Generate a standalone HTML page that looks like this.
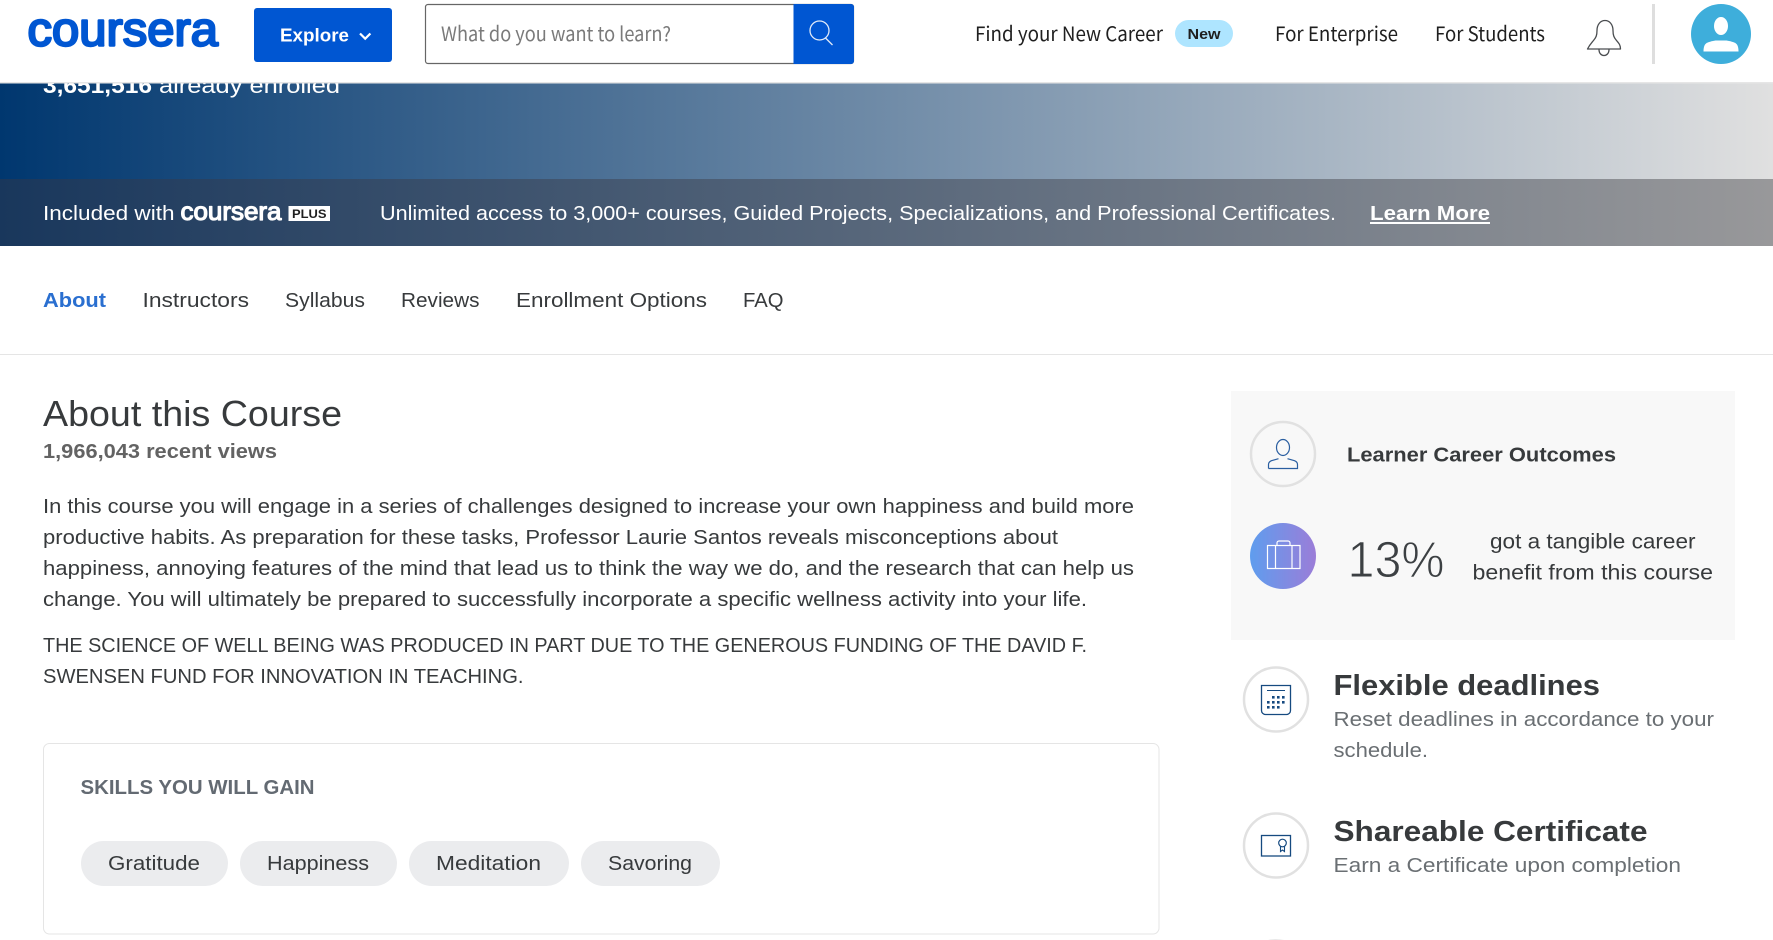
<!DOCTYPE html>
<html lang="en">
<head>
<meta charset="utf-8">
<title>The Science of Well-Being | Coursera</title>
<style>
html,body{margin:0;padding:0;width:1773px;height:940px;overflow:hidden;background:#fff}
svg{display:block;font-family:"Liberation Sans",Arial,sans-serif}
text{white-space:pre}
.b{font-weight:700}
.p{font-size:20.5px;fill:#373a3c}
.g{font-size:20.5px;fill:#6a6f73}
.h{font-family:"Noto Sans CJK JP","Liberation Sans",sans-serif;font-size:20px;fill:#1f1f1f}
</style>
</head>
<body>
<svg width="1773" height="940" viewBox="0 0 1773 940" xmlns="http://www.w3.org/2000/svg">
<defs>
<linearGradient id="hero" x1="0" x2="1" y1="0" y2="0"><stop offset="0" stop-color="#00376f"/><stop offset="1" stop-color="#e0e0e0"/></linearGradient>
<linearGradient id="band" x1="0" x2="1" y1="0" y2="0"><stop offset="0" stop-color="#19375c"/><stop offset="1" stop-color="#98989a"/></linearGradient>
<linearGradient id="brief" x1="0" x2="1" y1="0" y2="0"><stop offset="0" stop-color="#5f9dee"/><stop offset="1" stop-color="#9b7dd8"/></linearGradient>
</defs>

<rect width="1773" height="940" fill="#fff"/>

<!-- hero -->
<rect x="0" y="83" width="1773" height="96" fill="url(#hero)"/>
<text class="b" x="43" y="93" font-size="22" fill="#fff" textLength="109" lengthAdjust="spacingAndGlyphs">3,651,516</text>
<text x="159" y="93" font-size="22" fill="#fff" textLength="181" lengthAdjust="spacingAndGlyphs">already enrolled</text>

<!-- header -->
<rect x="0" y="0" width="1773" height="82" fill="#fff"/>
<rect x="0" y="82" width="1773" height="1.5" fill="#e6e6e6"/>
<text x="27.500" y="45.500" font-size="47.5" fill="#0056d2" stroke="#0056d2" stroke-width="2.4" stroke-linejoin="round" textLength="190.500" lengthAdjust="spacingAndGlyphs">coursera</text>

<rect x="254" y="8" width="138" height="54" rx="3" fill="#0056d2"/>
<text class="b" x="280" y="41.5" font-size="18" fill="#fff" textLength="69" lengthAdjust="spacingAndGlyphs">Explore</text>
<path d="M360 33.5l5.200 5.200 5.200-5.200" fill="none" stroke="#fff" stroke-width="2.200"/>

<rect x="425.500" y="4.500" width="428" height="59" rx="2.500" fill="#fff" stroke="#666" stroke-width="1.200"/>
<path d="M793.500 4h57.500a3 3 0 0 1 3 3v54a3 3 0 0 1-3 3h-57.500z" fill="#0056d2"/>
<text class="h" x="441" y="41" style="fill:#7a7a7a" textLength="230" lengthAdjust="spacingAndGlyphs">What do you want to learn?</text>
<circle cx="819.500" cy="30.500" r="9.500" fill="none" stroke="#dfe9f8" stroke-width="1.300"/>
<path d="M825.500 38l7 7" fill="none" stroke="#dfe9f8" stroke-width="1.300"/>

<text class="h" x="975" y="41" textLength="188" lengthAdjust="spacingAndGlyphs">Find your New Career</text>
<rect x="1175" y="20" width="58" height="27" rx="13.500" fill="#aee5ff"/>
<text class="b" x="1187.500" y="39" font-size="15" fill="#1f1f1f" textLength="33" lengthAdjust="spacingAndGlyphs">New</text>
<text class="h" x="1275" y="41" textLength="123" lengthAdjust="spacingAndGlyphs">For Enterprise</text>
<text class="h" x="1435" y="41" textLength="110" lengthAdjust="spacingAndGlyphs">For Students</text>

<path d="M1587.500 49h33c0-4-1.500-5.500-4-8.500-2.500-3-3.500-5-3.500-10 0-6-3.500-10-8-10s-8 4-8 10c0 5-1 7-3.500 10-2.500 3-4 4.500-6 8.500z" fill="#fff" stroke="#4a4d50" stroke-width="1.300" stroke-linejoin="round"/>
<path d="M1599 49.500c0 8 10 8 10 0" fill="none" stroke="#4a4d50" stroke-width="1.300"/>
<rect x="1652" y="4" width="3" height="60" fill="#dedede"/>
<circle cx="1721" cy="34" r="30" fill="#3eaedb"/>
<ellipse cx="1721" cy="26" rx="7" ry="9" fill="#fff"/>
<path d="M1703.500 51.500c0-3 .5-6 2-7.500 2-2 7-3 10-3.500h11c3 .5 8 1.500 10 3.500 1.500 1.500 2 4.500 2 7.500z" fill="#fff"/>

<!-- plus band -->
<rect x="0" y="179" width="1773" height="67" fill="url(#band)"/>
<text x="43" y="220" font-size="20.500" fill="#fff" textLength="131.500" lengthAdjust="spacingAndGlyphs">Included with</text>
<text x="180.500" y="220" font-size="25" fill="#fff" stroke="#fff" stroke-width="1.200" stroke-linejoin="round" textLength="101" lengthAdjust="spacingAndGlyphs">coursera</text>
<rect x="288.500" y="206" width="41.500" height="15" fill="#fff"/>
<text class="b" x="292" y="218" font-size="12" fill="#1f1f1f" textLength="34.500" lengthAdjust="spacingAndGlyphs">PLUS</text>
<text x="380" y="220" font-size="20.500" fill="#fff" textLength="956" lengthAdjust="spacingAndGlyphs">Unlimited access to 3,000+ courses, Guided Projects, Specializations, and Professional Certificates.</text>
<text class="b" x="1370" y="220" font-size="20.500" fill="#fff" textLength="120" lengthAdjust="spacingAndGlyphs">Learn More</text>
<rect x="1370" y="222" width="120" height="2" fill="#fff"/>

<!-- tabs -->
<text class="b" x="43" y="307" font-size="20.500" fill="#2a6fd0" textLength="63" lengthAdjust="spacingAndGlyphs">About</text>
<text x="142.500" y="307" font-size="20.500" fill="#373a3c" textLength="106.500" lengthAdjust="spacingAndGlyphs">Instructors</text>
<text x="285" y="307" font-size="20.500" fill="#373a3c" textLength="80" lengthAdjust="spacingAndGlyphs">Syllabus</text>
<text x="401" y="307" font-size="20.500" fill="#373a3c" textLength="78.500" lengthAdjust="spacingAndGlyphs">Reviews</text>
<text x="516" y="307" font-size="20.500" fill="#373a3c" textLength="191" lengthAdjust="spacingAndGlyphs">Enrollment Options</text>
<text x="743" y="307" font-size="20.500" fill="#373a3c" textLength="40.500" lengthAdjust="spacingAndGlyphs">FAQ</text>
<rect x="0" y="354" width="1773" height="1" fill="#e5e5e5"/>

<!-- about -->
<text x="43" y="426" font-size="36" fill="#373a3c" textLength="299" lengthAdjust="spacingAndGlyphs">About this Course</text>
<text class="b" x="43" y="458" font-size="20.500" fill="#636363" textLength="234" lengthAdjust="spacingAndGlyphs">1,966,043 recent views</text>
<text class="p" x="43" y="513" textLength="1091" lengthAdjust="spacingAndGlyphs">In this course you will engage in a series of challenges designed to increase your own happiness and build more</text>
<text class="p" x="43" y="544" textLength="1015" lengthAdjust="spacingAndGlyphs">productive habits. As preparation for these tasks, Professor Laurie Santos reveals misconceptions about</text>
<text class="p" x="43" y="575" textLength="1091" lengthAdjust="spacingAndGlyphs">happiness, annoying features of the mind that lead us to think the way we do, and the research that can help us</text>
<text class="p" x="43" y="606" textLength="1044" lengthAdjust="spacingAndGlyphs">change. You will ultimately be prepared to successfully incorporate a specific wellness activity into your life.</text>
<text class="p" x="43" y="652" textLength="1044" lengthAdjust="spacingAndGlyphs">THE SCIENCE OF WELL BEING WAS PRODUCED IN PART DUE TO THE GENEROUS FUNDING OF THE DAVID F.</text>
<text class="p" x="43" y="683" textLength="480.500" lengthAdjust="spacingAndGlyphs">SWENSEN FUND FOR INNOVATION IN TEACHING.</text>

<!-- skills -->
<rect x="43.500" y="743.500" width="1115.500" height="190.500" rx="6" fill="#fff" stroke="#e5e5e5"/>
<text class="b" x="80.500" y="794" font-size="20.500" fill="#636a72" textLength="234" lengthAdjust="spacingAndGlyphs">SKILLS YOU WILL GAIN</text>
<rect x="81" y="841" width="147" height="45" rx="22.500" fill="#ebecee"/>
<rect x="240" y="841" width="157" height="45" rx="22.500" fill="#ebecee"/>
<rect x="409" y="841" width="160" height="45" rx="22.500" fill="#ebecee"/>
<rect x="581" y="841" width="139" height="45" rx="22.500" fill="#ebecee"/>
<text x="108" y="870" font-size="20.500" fill="#373a3c" textLength="92" lengthAdjust="spacingAndGlyphs">Gratitude</text>
<text x="267" y="870" font-size="20.500" fill="#373a3c" textLength="102" lengthAdjust="spacingAndGlyphs">Happiness</text>
<text x="436" y="870" font-size="20.500" fill="#373a3c" textLength="105" lengthAdjust="spacingAndGlyphs">Meditation</text>
<text x="608" y="870" font-size="20.500" fill="#373a3c" textLength="84" lengthAdjust="spacingAndGlyphs">Savoring</text>

<!-- outcomes panel -->
<rect x="1231" y="391" width="504" height="249" fill="#f8f8f8"/>
<circle cx="1283" cy="454" r="32" fill="none" stroke="#e1e1e1" stroke-width="2.500"/>
<ellipse cx="1283" cy="447.500" rx="6.500" ry="8" fill="none" stroke="#2a5ea0" stroke-width="1.200"/>
<path d="M1268.500 468.500h29v-4c0-2-1-3-3-3.800l-7-2M1268.500 468.500v-4c0-2 1-3 3-3.800l7-2" fill="none" stroke="#2a5ea0" stroke-width="1.200"/>
<text class="b" x="1347" y="461.500" font-size="20.500" fill="#373a3c" textLength="269" lengthAdjust="spacingAndGlyphs">Learner Career Outcomes</text>
<circle cx="1283" cy="556" r="33" fill="url(#brief)"/>
<g fill="none" stroke="#fff" stroke-width="1.200">
<rect x="1267.500" y="545.500" width="32.500" height="23"/>
<path d="M1275.500 545.500v23M1292 545.500v23M1277 545v-2a2 2 0 0 1 2-2h9a2 2 0 0 1 2 2v2"/>
</g>
<text x="1347.500" y="577" font-size="51" fill="#3c4043" stroke="#f8f8f8" stroke-width="1" textLength="97" lengthAdjust="spacingAndGlyphs">13%</text>
<text x="1490" y="548.500" font-size="21.500" fill="#373a3c" textLength="205.500" lengthAdjust="spacingAndGlyphs">got a tangible career</text>
<text x="1472.500" y="579.500" font-size="21.500" fill="#373a3c" textLength="240.500" lengthAdjust="spacingAndGlyphs">benefit from this course</text>

<!-- flexible deadlines -->
<circle cx="1276" cy="699.500" r="32" fill="none" stroke="#e1e1e1" stroke-width="2.500"/>
<path d="M1261.500 685.500h29v25a4 4 0 0 1-4 4h-21a4 4 0 0 1-4-4z" fill="none" stroke="#164a80" stroke-width="1.300"/>
<path d="M1267 690.500h18" stroke="#164a80" stroke-width="1"/>
<g fill="#164a80">
<rect x="1272" y="696" width="2.600" height="2.600"/><rect x="1277" y="696" width="2.600" height="2.600"/><rect x="1282" y="696" width="2.600" height="2.600"/>
<rect x="1267" y="701" width="2.600" height="2.600"/><rect x="1272" y="701" width="2.600" height="2.600"/><rect x="1277" y="701" width="2.600" height="2.600"/><rect x="1282" y="701" width="2.600" height="2.600"/>
<rect x="1267" y="706" width="2.600" height="2.600"/><rect x="1272" y="706" width="2.600" height="2.600"/><rect x="1277" y="706" width="2.600" height="2.600"/>
</g>
<text class="b" x="1333.500" y="695" font-size="29" fill="#373a3c" textLength="266.500" lengthAdjust="spacingAndGlyphs">Flexible deadlines</text>
<text class="g" x="1333.500" y="726" textLength="380.500" lengthAdjust="spacingAndGlyphs">Reset deadlines in accordance to your</text>
<text class="g" x="1333.500" y="757" textLength="94.500" lengthAdjust="spacingAndGlyphs">schedule.</text>

<!-- certificate -->
<circle cx="1276" cy="845.500" r="32" fill="none" stroke="#e1e1e1" stroke-width="2.500"/>
<rect x="1261.500" y="835.500" width="29" height="20.500" fill="none" stroke="#164a80" stroke-width="1.300"/>
<circle cx="1282.500" cy="843" r="3.800" fill="none" stroke="#164a80" stroke-width="1.200"/>
<path d="M1280.500 846.500v5l2-1.500 2 1.500v-5" fill="none" stroke="#164a80" stroke-width="1.100"/>
<text class="b" x="1333.500" y="841" font-size="29" fill="#373a3c" textLength="314" lengthAdjust="spacingAndGlyphs">Shareable Certificate</text>
<text class="g" x="1333.500" y="872" textLength="347.500" lengthAdjust="spacingAndGlyphs">Earn a Certificate upon completion</text>

<path d="M1268 940Q1276 938.500 1284 940Z" fill="#e1e1e1"/>
</svg>
</body>
</html>
